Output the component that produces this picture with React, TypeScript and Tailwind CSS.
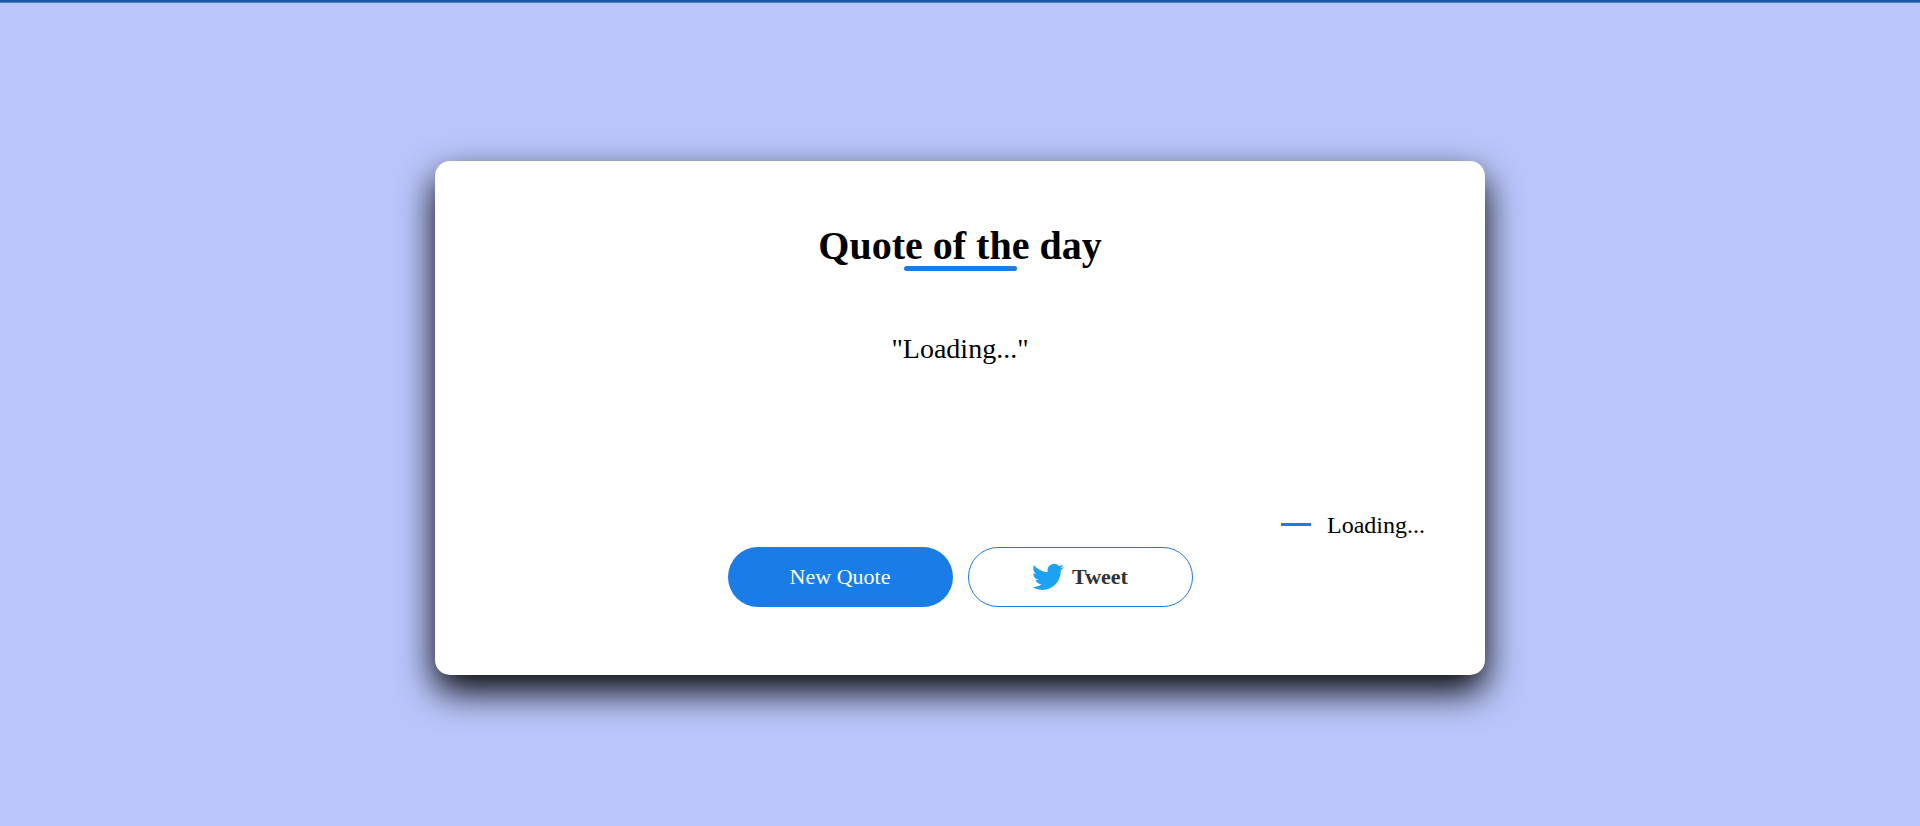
export default function App() {
  return (
    <div className="flex min-h-screen flex-col bg-[#bac6fb] font-['Liberation_Serif',serif] text-black">
      <div className="h-[3px] border-t-2 border-[#1c56a5] bg-[#4780c4]" />
      <main className="flex grow items-center justify-center pt-1.5">
        <section className="flex min-h-[514px] w-full max-w-[1050px] flex-col items-center rounded-[15px] bg-white px-[60px] pt-16 pb-[68px] shadow-[0_16px_36px_#000]">
          <h1 className="text-[40px] leading-[41px] font-bold">Quote of the day</h1>
          <div className="h-[5px] w-[113px] rounded-full bg-[#1a7ce6]" />
          <blockquote className="mt-15 grow text-[28px] leading-9">"Loading..."</blockquote>
          <p className="flex items-center gap-4 self-end pb-2 text-2xl leading-7">
            <span className="h-[3px] w-[30px] bg-[#1a7ce6]" />
            Loading...
          </p>
          <div className="flex flex-wrap justify-center gap-[15px]">
            <button className="h-[60px] w-[225px] rounded-full bg-[#1a7ce6] text-[22px] text-white">
              New Quote
            </button>
            <button className="flex h-[60px] w-[225px] items-center justify-center gap-2 rounded-full border border-[#1a7ce6] text-[22px] font-bold text-[#333]">
              <svg viewBox="0 0 24 24" className="size-8 fill-[#1da1f2]" aria-hidden="true">
                <path d="M23.953 4.57a10 10 0 01-2.825.775 4.958 4.958 0 002.163-2.723c-.951.555-2.005.959-3.127 1.184a4.92 4.92 0 00-8.384 4.482C7.69 8.095 4.067 6.13 1.64 3.162a4.822 4.822 0 00-.666 2.475c0 1.71.87 3.213 2.188 4.096a4.904 4.904 0 01-2.228-.616v.06a4.923 4.923 0 003.946 4.827 4.996 4.996 0 01-2.212.085 4.936 4.936 0 004.604 3.417 9.867 9.867 0 01-6.102 2.105c-.39 0-.779-.023-1.17-.067a13.995 13.995 0 007.557 2.209c9.053 0 13.998-7.496 13.998-13.985 0-.21 0-.42-.015-.63A9.935 9.935 0 0024 4.59z" />
              </svg>
              Tweet
            </button>
          </div>
        </section>
      </main>
    </div>
  );
}
